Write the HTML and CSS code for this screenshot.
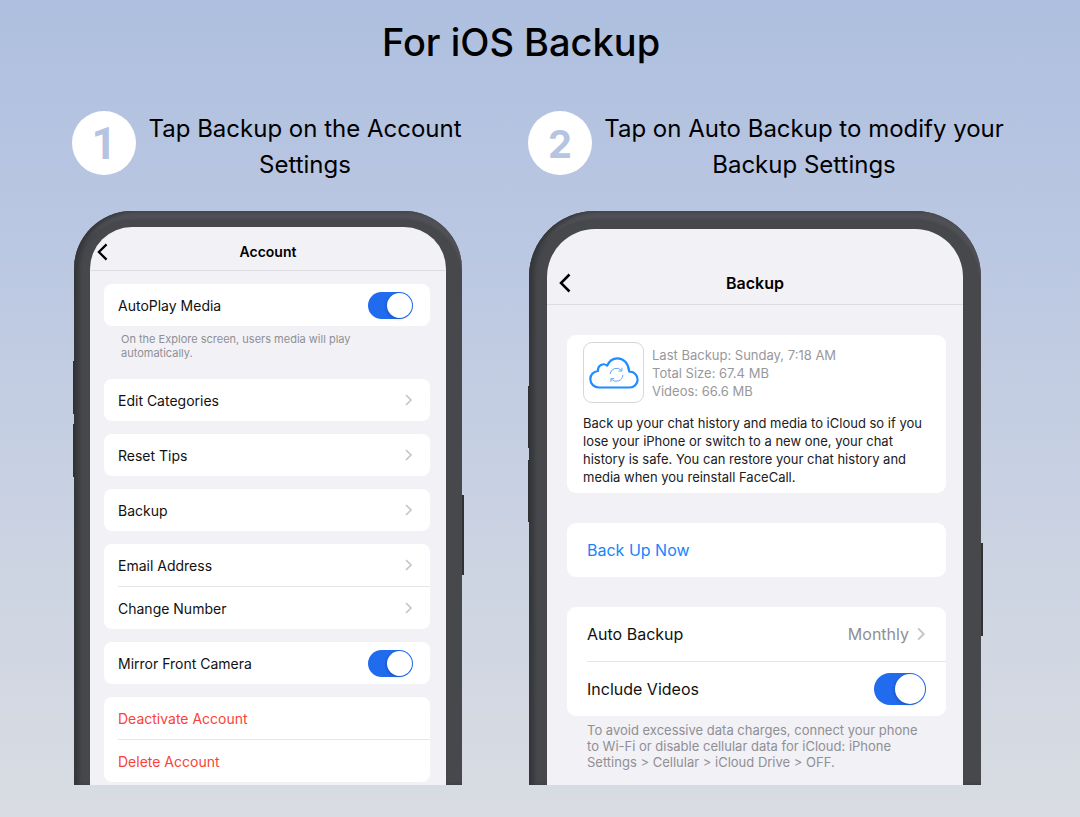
FILE: index.html
```html
<!DOCTYPE html>
<html lang="en">
<head>
	<meta charset="utf-8">
	<meta name="viewport" content="width=device-width, initial-scale=1">
	<title>For iOS Backup</title>
	<link rel="stylesheet" href="styles.css">
</head>
<body>
<h1 class="title">For iOS Backup</h1>

<main class="steps">
	<section>
		<div class="step-head">
			<span class="badge badge-one">1</span>
			<h2>Tap Backup on the Account Settings</h2>
		</div>

		<div class="phone phone-account">
			<span class="side-key key-up"></span>
			<span class="side-key key-down"></span>
			<span class="side-key key-power"></span>
			<div class="screen">
				<div class="nav-bar">
					<button class="back" aria-label="Back">
						<svg viewBox="0 0 12 20"><path d="M10.500 1.500L2 10l8.500 8.500"/></svg>
					</button>
					<h3>Account</h3>
				</div>
				<div class="content">
					<div class="card">
						<div class="row">
							<label for="autoplay">AutoPlay Media</label>
							<input id="autoplay" class="toggle" type="checkbox" checked>
						</div>
					</div>
					<p class="note">On the Explore screen, users media will play automatically.</p>
					<div class="card">
						<a class="row" href="#categories">Edit Categories <svg class="chevron" viewBox="0 0 8 12"><path d="M1 1l5 5-5 5"/></svg></a>
					</div>
					<div class="card">
						<a class="row" href="#tips">Reset Tips <svg class="chevron" viewBox="0 0 8 12"><path d="M1 1l5 5-5 5"/></svg></a>
					</div>
					<div class="card">
						<a class="row" href="#backup">Backup <svg class="chevron" viewBox="0 0 8 12"><path d="M1 1l5 5-5 5"/></svg></a>
					</div>
					<div class="card">
						<a class="row" href="#email">Email Address <svg class="chevron" viewBox="0 0 8 12"><path d="M1 1l5 5-5 5"/></svg></a>
						<hr>
						<a class="row" href="#number">Change Number <svg class="chevron" viewBox="0 0 8 12"><path d="M1 1l5 5-5 5"/></svg></a>
					</div>
					<div class="card">
						<div class="row">
							<label for="mirror">Mirror Front Camera</label>
							<input id="mirror" class="toggle" type="checkbox" checked>
						</div>
					</div>
					<div class="card">
						<button class="row danger">Deactivate Account</button>
						<hr>
						<button class="row danger">Delete Account</button>
					</div>
				</div>
			</div>
		</div>
	</section>

	<section>
		<div class="step-head">
			<span class="badge">2</span>
			<h2>Tap on Auto Backup to modify your Backup Settings</h2>
		</div>

		<div class="phone phone-backup" id="backup">
			<span class="side-key key-up"></span>
			<span class="side-key key-down"></span>
			<span class="side-key key-power"></span>
			<div class="screen">
				<div class="nav-bar">
					<button class="back" aria-label="Back">
						<svg viewBox="0 0 12 20"><path d="M10.500 1.500L2 10l8.500 8.500"/></svg>
					</button>
					<h3>Backup</h3>
				</div>
				<div class="content">
					<div class="card summary">
						<div class="summary-top">
							<div class="cloud">
								<svg viewBox="0 0 50 32">
									<path class="cloud-line" d="M10 30.500H40.500a7.700 7.700 0 0 0 .5-15.800c-.8 0-1-.2-1-.8C39.500 6.500 34.500 1.300 28.500 1.300c-4.600 0-8.400 2.700-10.300 7.400-3.700-3.200-9.700-.5-9.200 5.300C4.500 14.400 1.300 17.800 1.300 22c0 4.900 4 8.500 8.700 8.500z"/>
									<path class="sync-line" d="M21 17a6.600 6.600 0 0 1 11.500-3.500M33.800 17.800a6.600 6.600 0 0 1-11.600 4.200M32.900 10.700v3.300h-3.300M21.900 25v-3.300h3.300"/>
								</svg>
							</div>
							<p>Last Backup: Sunday, 7:18 AM<br>Total Size: 67.4 MB<br>Videos: 66.6 MB</p>
						</div>
						<p class="about">Back up your chat history and media to iCloud so if you lose your iPhone or switch to a new one, your chat history is safe. You can restore your chat history and media when you reinstall FaceCall.</p>
					</div>
					<div class="card">
						<button class="row action">Back Up Now</button>
					</div>
					<div class="card">
						<button class="row">Auto Backup <span class="value">Monthly <svg class="chevron" viewBox="0 0 8 12"><path d="M1 1l5 5-5 5"/></svg></span></button>
						<hr>
						<div class="row">
							<label for="videos">Include Videos</label>
							<input id="videos" class="toggle" type="checkbox" checked>
						</div>
					</div>
					<p class="note">To avoid excessive data charges, connect your phone to Wi-Fi or disable cellular data for iCloud: iPhone Settings &gt; Cellular &gt; iCloud Drive &gt; OFF.</p>
				</div>
			</div>
		</div>
	</section>
</main>
</body>
</html>
```
FILE: styles.css
```css
* {
	box-sizing: border-box;
}

html {
	min-height: 100%;
	background: linear-gradient(#aebfdf, #bac7e2 28%, #cfd6e2 75%, #d9dce2);
}

body {
	margin: 0;
	font-family: Inter, "Liberation Sans", sans-serif;
	color: #111;
}

h1, h2, h3, p {
	margin: 0;
	font-weight: normal;
}

.title {
	padding: 18px 38px 45px 0;
	font-size: 38px;
	line-height: 48px;
	font-weight: 500;
	text-align: center;
	color: #000;
}

.steps {
	display: grid;
	grid-template-columns: 394fr 480fr;
	gap: 62px;
	padding: 0 72px;
	padding-bottom: 32px;
}

.step-head {
	display: flex;
	gap: 8px;
	height: 100px;
}

.step-head h2 {
	flex: 1;
	font-size: 24px;
	line-height: 36px;
	text-align: center;
	color: #000;
}

.badge {
	flex: none;
	width: 64px;
	height: 64px;
	border-radius: 50%;
	background: #fff;
	color: #b5c4e1;
	font-size: 38px;
	line-height: 66px;
	font-weight: bold;
	text-align: center;
}

.badge-one {
	font-family: Roboto, sans-serif;
	font-size: 44px;
}

/* phones */
.phone {
	position: relative;
	background: #47484c;
	box-shadow: inset 5px 0 4px #35373a, inset 0 8px 2px #505156;
}

.phone-account {
	max-width: 388px;
	margin-left: 2px;
	padding: 16px 16px 0;
	border-radius: 58px 58px 0 0;
}

.phone-backup {
	max-width: 452px;
	margin-left: 1px;
	padding: 18px 18px 0;
	border-radius: 66px 66px 0 0;
}

.screen {
	background: #f2f1f6;
	border-radius: 42px 42px 0 0;
	overflow: hidden;
}

.phone-backup .screen {
	border-radius: 48px 48px 0 0;
}

.side-key {
	position: absolute;
	left: -1px;
	width: 2px;
	background: #303234;
}

.key-power {
	left: auto;
	right: -2px;
}

.phone-account .side-key {
	height: 53px;
}

.phone-account .key-up {
	top: 150px;
}

.phone-account .key-down {
	top: 213px;
}

.phone-account .key-power {
	top: 284px;
	height: 80px;
}

.phone-backup .side-key {
	height: 62px;
}

.phone-backup .key-up {
	top: 175px;
}

.phone-backup .key-down {
	top: 249px;
}

.phone-backup .key-power {
	top: 332px;
	height: 93px;
}

.nav-bar {
	display: grid;
	grid-template-columns: 40px 1fr 40px;
	align-items: center;
	height: 44px;
	padding-top: 6px;
	border-bottom: 1px solid #dddce1;
}

.nav-bar h3 {
	font-size: 14px;
	font-weight: 600;
	text-align: center;
	color: #000;
}

.phone-backup .nav-bar {
	height: 76px;
	padding-top: 32px;
}

.phone-backup .nav-bar h3 {
	font-size: 16px;
}

button {
	border: 0;
	background: none;
	font: inherit;
	color: inherit;
}

.back {
	display: flex;
	padding: 0 0 0 7px;
}

.back svg {
	width: 11px;
	height: 18px;
	fill: none;
	stroke: #000;
	stroke-width: 2.5;
}

.phone-backup .back {
	padding-left: 12px;
}

.phone-backup .back svg {
	width: 12px;
	height: 20px;
}

/* settings lists */
.content {
	display: flex;
	flex-direction: column;
	gap: 13px;
	padding: 13px 16px 3px 14px;
	font-size: 14px;
}

.card {
	background: #fff;
	border-radius: 8px;
}

.row {
	display: flex;
	align-items: center;
	justify-content: space-between;
	width: 100%;
	height: 42px;
	padding: 0 17px 0 14px;
	color: inherit;
	text-align: left;
	text-decoration: none;
}

.card hr {
	height: 1px;
	margin: 0 0 0 14px;
	border: 0;
	background: #e6e6e9;
}

.chevron {
	width: 8px;
	height: 12px;
	fill: none;
	stroke: #c4c4c7;
	stroke-width: 1.6;
}

.toggle {
	appearance: none;
	display: flex;
	justify-content: flex-end;
	width: 45px;
	height: 27px;
	margin: 0;
	padding: 1px;
	border-radius: 16px;
	background: #216bee;
}

.toggle::before {
	content: "";
	height: 100%;
	aspect-ratio: 1;
	border-radius: 50%;
	background: #fff;
	box-shadow: -1px 1px 3px rgba(0, 0, 0, 0.2);
}

.toggle:not(:checked) {
	justify-content: flex-start;
	background: #d5d5da;
}

.danger {
	color: #fa4238;
}

.note {
	margin: -7px 50px 6px 17px;
	font-size: 11px;
	line-height: 14px;
	color: #8f8f94;
}

.phone-backup .content {
	gap: 30px;
	padding: 30px 17px 15px 20px;
	font-size: 16px;
}

.phone-backup .card {
	border-radius: 9px;
}

.phone-backup .row {
	height: 54px;
	padding: 0 20px;
}

.phone-backup hr {
	margin-left: 20px;
}

.phone-backup .action {
	color: #1784fe;
}

.phone-backup .toggle {
	width: 52px;
	height: 32px;
}

.phone-backup .note {
	margin: -24px 20px 0;
	font-size: 13px;
	line-height: 16px;
}

.phone-backup .chevron {
	width: 9px;
	height: 14px;
}

.value {
	display: flex;
	align-items: center;
	gap: 8px;
	color: #8f8f93;
}

.summary {
	padding: 7px 16px;
	font-size: 13px;
	line-height: 18px;
}

.summary-top {
	display: flex;
	align-items: center;
	gap: 8px;
	margin-bottom: 11px;
	color: #98989c;
}

.cloud {
	display: grid;
	place-items: center;
	width: 61px;
	height: 61px;
	border: 1px solid #d6d6d8;
	border-radius: 9px;
}

.cloud svg {
	width: 50px;
	height: 32px;
	fill: none;
	stroke: #218bff;
	stroke-linejoin: round;
}

.cloud-line {
	stroke-width: 2.2;
}

.sync-line {
	stroke: #5ca9fb;
	stroke-width: 1;
}

.about {
	color: #202022;
}
```
